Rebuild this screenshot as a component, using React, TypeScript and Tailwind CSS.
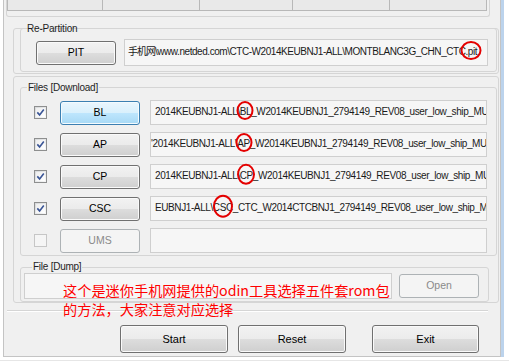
import React from "react";

const ui = "font-['Liberation_Sans',Arial,sans-serif]";

function Check({ on }: { on: boolean }) {
  if (on) {
    return (
      <div className="w-[13px] h-[13px] shrink-0 border border-[#8e8f8f] bg-[linear-gradient(135deg,#d6d8da,#f7f7f7)] p-[1px]">
        <div className="w-full h-full bg-[linear-gradient(135deg,#eeeeee,#ffffff)] flex items-center justify-center">
          <svg width="9" height="9" viewBox="0 0 9 9">
            <path d="M1.3 4.4 L3.6 6.9 L7.8 1.5" fill="none" stroke="#3a5596" strokeWidth="1.6" />
          </svg>
        </div>
      </div>
    );
  }
  return <div className="w-[13px] h-[13px] shrink-0 border border-[#c6c6c6] bg-[#f5f5f5]" />;
}

function Btn({ label, v }: { label: string; v: "n" | "hot" | "dis" }) {
  if (v === "hot") {
    return (
      <div className="w-[80px] h-[24px] shrink-0 rounded-[3px] border border-[#3c7fb1] bg-[linear-gradient(#eaf6fd_0%,#d9f0fc_50%,#bee6fd_50%,#a7d9f5_100%)] shadow-[inset_0_0_0_1px_#f4fbfe] flex items-center justify-center text-[10.5px] text-black">
        {label}
      </div>
    );
  }
  if (v === "dis") {
    return (
      <div className="w-[80px] h-[24px] shrink-0 rounded-[3px] border border-[#adb2b5] bg-[#f4f4f4] flex items-center justify-center text-[10.5px] text-[#8a8a8a]">
        {label}
      </div>
    );
  }
  return (
    <div className="w-[80px] h-[24px] shrink-0 rounded-[3px] border border-[#707070] bg-[linear-gradient(#f2f2f2_0%,#ebebeb_50%,#dddddd_50%,#cfcfcf_100%)] shadow-[inset_0_0_0_1px_#fafafa] flex items-center justify-center text-[10.5px] text-black">
      {label}
    </div>
  );
}

function Circ({ children, size }: { children: React.ReactNode; size: string }) {
  return (
    <span className="relative inline-block">
      {children}
      <span className={`absolute left-1/2 top-1/2 -translate-x-1/2 -translate-y-[58%] rounded-[50%] border-2 border-[#e40000] ${size}`} />
    </span>
  );
}

function Field({ children, pad }: { children: React.ReactNode; pad: string }) {
  return (
    <div className={`w-[337px] h-[25px] shrink-0 border border-[#cfcfcf] bg-[#f6f6f6] overflow-x-clip whitespace-nowrap text-[10px] tracking-[-0.4px] leading-[12px] pt-[5px] text-[#1a1a1a] ${pad}`}>
      {children}
    </div>
  );
}

function FileRow({ on, label, v, pad, children }: { on: boolean; label: string; v: "n" | "hot" | "dis"; pad: string; children?: React.ReactNode }) {
  return (
    <div className="flex items-center h-[25px]">
      <div className="ml-[13px]">
        <Check on={on} />
      </div>
      <div className="ml-[13px]">
        <Btn label={label} v={v} />
      </div>
      <div className="ml-[10px]">
        <Field pad={pad}>{children}</Field>
      </div>
    </div>
  );
}

export default function App() {
  return (
    <div className={`w-[509px] h-[363px] bg-white overflow-hidden relative ${ui}`}>
      <div className="flex h-[357px]">
        <div className="w-[3px] shrink-0" />
        <div className="w-[498px] h-[357px] shrink-0 bg-[#f0f0f0] border-l border-r border-b border-[#c4c4c4] flex flex-col">
          {/* top partial group with cells */}
          <div className="ml-[2px] w-[484px] h-[17px] shrink-0 border-l border-r border-b border-[#d5d5d5] rounded-b-[3px]">
            <div className="flex h-[11px]">
              <div className="w-[96px] h-full border-l border-r border-b border-[#b8b8b8] bg-[#e9e9e9]" />
              <div className="w-[97px] h-full border-r border-b border-[#b8b8b8] bg-[#e9e9e9]" />
              <div className="w-[93px] h-full border-r border-b border-[#b8b8b8] bg-[#e9e9e9]" />
              <div className="w-[97px] h-full border-r border-b border-[#b8b8b8] bg-[#e9e9e9]" />
              <div className="w-[97px] h-full border-r border-b border-[#b8b8b8] bg-[#e9e9e9]" />
            </div>
          </div>

          {/* container 1: Re-Partition */}
          <div className="mt-[11px] ml-[9px] w-[486px] h-[46px] shrink-0 border border-[#d5d5d5] rounded-[3px] pl-[6px] pr-[1px]">
            <fieldset className="-mt-[7px] border border-[#d5d5d5] rounded-[3px]">
              <legend className="ml-[5px] px-[1px] text-[10px] tracking-[-0.2px] leading-[13px] text-[#1e1e1e]">Re-Partition</legend>
              <div className="flex items-center h-[27px] mt-[4px] mb-[5px]">
                <div className="ml-[15px]">
                  <Btn label="PIT" v="n" />
                </div>
                <div className="ml-[8px] w-[364px] h-[27px] border border-[#cfcfcf] bg-[#f6f6f6] overflow-x-clip whitespace-nowrap text-[10px] tracking-[-0.45px] leading-[12px] pt-[5px] pl-[3px] text-[#1a1a1a]">
                  <span className="font-['Noto_Sans_CJK_SC',sans-serif] tracking-[-1px]">手机网</span>
                  \www.netded.com\CTC-W2014KEUBNJ1-ALL\MONTBLANC3G_CHN_CTC
                  <Circ size="w-[21px] h-[19px]">.pit</Circ>
                </div>
              </div>
            </fieldset>
          </div>

          {/* container 2: Files + Dump */}
          <div className="mt-[2px] ml-[9px] w-[486px] h-[227px] shrink-0 border border-[#d5d5d5] rounded-[3px] pl-[6px] pr-[1px]">
            <fieldset className="mt-[4px] border border-[#d5d5d5] rounded-[3px]">
              <legend className="ml-[6px] px-[1px] text-[10px] tracking-[-0.25px] leading-[13px] text-[#1e1e1e]">Files [Download]</legend>
              <div className="flex flex-col gap-[7px] pt-[6px] pb-[2px]">
                <FileRow on label="BL" v="hot" pad="pl-[4px]">
                  2014KEUBNJ1-ALL\<Circ size="w-[17px] h-[19px]">BL</Circ>_W2014KEUBNJ1_2794149_REV08_user_low_ship_MULTI_CERT.tar.md5
                </FileRow>
                <FileRow on label="AP" v="n" pad="pl-[0px]">
                  '2014KEUBNJ1-ALL\<Circ size="w-[17px] h-[19px]">AP</Circ>_W2014KEUBNJ1_2794149_REV08_user_low_ship_MULTI_CERT.tar.md5
                </FileRow>
                <FileRow on label="CP" v="n" pad="pl-[4px]">
                  2014KEUBNJ1-ALL\<Circ size="w-[18px] h-[21px]">CP</Circ>_W2014KEUBNJ1_2794149_REV08_user_low_ship_MULTI_CERT.tar.md5
                </FileRow>
                <FileRow on label="CSC" v="n" pad="pl-[4px]">
                  EUBNJ1-ALL\<Circ size="w-[20px] h-[23px]">CSC</Circ>_CTC_W2014CTCBNJ1_2794149_REV08_user_low_ship_MULTI_CERT.tar.md5
                </FileRow>
                <FileRow on={false} label="UMS" v="dis" pad="pl-[4px]" />
              </div>
            </fieldset>

            <fieldset className="mt-[5px] w-[469px] border border-[#d5d5d5] rounded-[3px]">
              <legend className="ml-[11px] px-[1px] text-[10px] tracking-[-0.25px] leading-[12px] text-[#1e1e1e]">File [Dump]</legend>
              <div className="flex items-center h-[26px] pb-[0px] mb-[2px]">
                <div className="ml-[3px] w-[368px] h-[26px] border border-[#cfcfcf] bg-[#f6f6f6]" />
                <div className="ml-[7px]">
                  <Btn label="Open" v="dis" />
                </div>
              </div>
            </fieldset>
          </div>

          {/* separator */}
          <div className="mt-[7px] ml-[3px] w-[481px] h-[2px] shrink-0 border-t border-b border-t-[#d5d5d5] border-b-white" />

          {/* bottom buttons */}
          <div className="mt-[13px] flex shrink-0">
            <div className="ml-[116px] w-[108px] h-[28px] rounded-[3px] border border-[#707070] bg-[linear-gradient(#f2f2f2_0%,#ebebeb_50%,#dddddd_50%,#cfcfcf_100%)] shadow-[inset_0_0_0_1px_#fafafa] flex items-center justify-center text-[11px] text-black">Start</div>
            <div className="ml-[10px] w-[108px] h-[28px] rounded-[3px] border border-[#707070] bg-[linear-gradient(#f2f2f2_0%,#ebebeb_50%,#dddddd_50%,#cfcfcf_100%)] shadow-[inset_0_0_0_1px_#fafafa] flex items-center justify-center text-[11px] text-black">Reset</div>
            <div className="ml-[26px] w-[107px] h-[28px] rounded-[3px] border border-[#707070] bg-[linear-gradient(#f2f2f2_0%,#ebebeb_50%,#dddddd_50%,#cfcfcf_100%)] shadow-[inset_0_0_0_1px_#fafafa] flex items-center justify-center text-[11px] text-black">Exit</div>
          </div>
        </div>
        <div className="w-[3px] shrink-0 bg-[#bcd3ec]" />
      </div>
      <div className="mt-[3px] h-px w-full bg-[#e6e6e6]" />

      {/* red annotation text */}
      <div className="absolute left-[63px] top-[281px] text-[14.2px] leading-[19px] text-[#ff0000] font-['Noto_Sans_CJK_SC','Noto_Sans_CJK_TC',sans-serif] whitespace-nowrap">
        <div>这个是迷你手机网提供的odin工具选择五件套rom包</div>
        <div>的方法，大家注意对应选择</div>
      </div>
    </div>
  );
}
